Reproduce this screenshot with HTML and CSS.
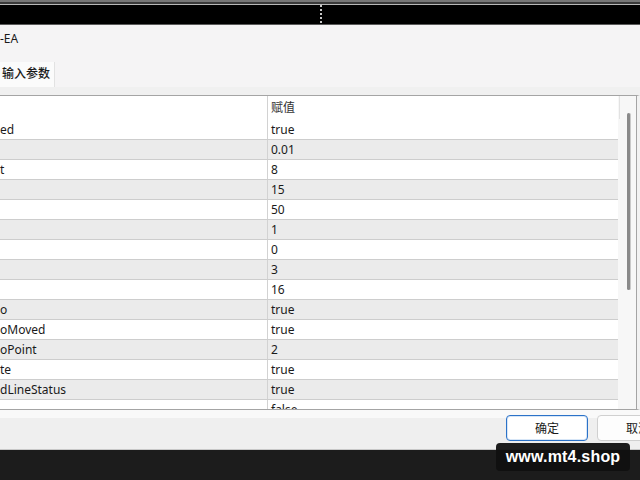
FILE: index.html
```html
<!DOCTYPE html>
<html lang="zh-CN">
<head>
<meta charset="utf-8">
<title>输入参数</title>
<link rel="stylesheet" href="styles.css">
</head>
<body>
<div class="screen">
  <div class="topbar">
    <div class="topbar-body"><span class="splitter"></span></div>
  </div>

  <div class="dialog">
    <div class="title">-EA</div>
    <div class="tabs"><div class="tab">输入参数</div></div>
    <div class="tab-gap"></div>

    <div class="grid-frame">
      <div class="grid">
        <div class="grid-head">
          <div class="cell name"></div>
          <div class="cell value">赋值</div>
        </div>
        <div class="grid-body">
          <div class="row"><div class="cell name">ed</div><div class="cell value">true</div></div>
          <div class="row alt"><div class="cell name"></div><div class="cell value">0.01</div></div>
          <div class="row"><div class="cell name">t</div><div class="cell value">8</div></div>
          <div class="row alt"><div class="cell name"></div><div class="cell value">15</div></div>
          <div class="row"><div class="cell name"></div><div class="cell value">50</div></div>
          <div class="row alt"><div class="cell name"></div><div class="cell value">1</div></div>
          <div class="row"><div class="cell name"></div><div class="cell value">0</div></div>
          <div class="row alt"><div class="cell name"></div><div class="cell value">3</div></div>
          <div class="row"><div class="cell name"></div><div class="cell value">16</div></div>
          <div class="row alt"><div class="cell name">o</div><div class="cell value">true</div></div>
          <div class="row"><div class="cell name">oMoved</div><div class="cell value">true</div></div>
          <div class="row alt"><div class="cell name">oPoint</div><div class="cell value">2</div></div>
          <div class="row"><div class="cell name">te</div><div class="cell value">true</div></div>
          <div class="row alt"><div class="cell name">dLineStatus</div><div class="cell value">true</div></div>
          <div class="row"><div class="cell name"></div><div class="cell value">false</div></div>
        </div>
      </div>
      <div class="scrollbar">
        <div class="scroll-head"></div>
        <div class="scroll-thumb"></div>
      </div>
    </div>

    <div class="footer">
      <button class="btn primary">确定</button>
      <button class="btn">取消</button>
    </div>
  </div>

  <div class="taskbar"></div>
  <div class="watermark">www.mt4.shop</div>
</div>
</body>
</html>
```

FILE: styles.css
```css
* {
  box-sizing: border-box;
}

html, body {
  margin: 0;
  padding: 0;
  background: #1c1c1c;
}

.screen {
  position: relative;
  width: 640px;
  height: 480px;
  overflow: hidden;
  display: flex;
  flex-direction: column;
  font-family: "Noto Sans", "Noto Sans CJK SC", sans-serif;
  font-size: 12px;
  color: #1a1a1a;
}

/* dark strip of the main window behind the dialog */
.topbar {
  height: 25px;
  flex: none;
  background: #777;
  padding-top: 2px;
}

.topbar-body {
  height: 23px;
  background: #000;
  border-top: 2px solid #3a3a3a;
  border-bottom: 1px solid #5a5a5a;
  box-shadow: inset 0 1px 0 #b8b8b8;
  padding-top: 1px;
}

.splitter {
  display: block;
  margin-left: 320px;
  width: 2px;
  height: 19px;
  background: repeating-linear-gradient(to bottom, #c8c8c8 0 2px, transparent 2px 4px);
}

.dialog {
  flex: none;
  height: 425px;
  background: #f5f4f5;
  display: flex;
  flex-direction: column;
}

.title {
  height: 34px;
  line-height: 28px;
  padding-left: 0;
  flex: none;
}

.tabs {
  height: 28px;
  flex: none;
  display: flex;
  align-items: flex-end;
  padding-top: 3px;
}

.tab {
  width: 55px;
  height: 25px;
  line-height: 23px;
  padding-left: 2px;
  background: #fbfbfb;
  border-right: 1px solid #e2e2e2;
  font-weight: 500;
}

.tab-gap {
  height: 8px;
  flex: none;
  background: #f0f0f0;
}

.grid-frame {
  flex: none;
  height: 315px;
  width: 640px;
  display: flex;
  background: #fff;
  border-top: 1px solid #a4a4a4;
  border-bottom: 1px solid #a4a4a4;
  border-right: 3px solid #f2f2f2;
}

.grid {
  width: 618px;
  flex: none;
  overflow: hidden;
}

.grid-head {
  display: flex;
  height: 24px;
  background: #fff;
}

.grid-head .cell {
  line-height: 24px;
  color: #333;
}

.row {
  display: flex;
  height: 20px;
  background: #fff;
  border-bottom: 1px solid #cdcdcd;
}

.row.alt {
  background: #ebebeb;
}

.cell {
  line-height: 19px;
  white-space: nowrap;
  overflow: hidden;
}

.cell.name {
  width: 268px;
  flex: none;
  border-right: 1px solid #d2d2d2;
}

.cell.value {
  flex: 1;
  padding-left: 3px;
}

.scrollbar {
  width: 19px;
  flex: none;
  background: #f7f7f7;
  border-right: 1px solid #a4a4a4;
  position: relative;
}

.scroll-head {
  width: 1px;
  height: 23px;
  margin-left: 1px;
  background: #e2e2e2;
}

.scroll-thumb {
  width: 3px;
  height: 177px;
  margin: -6px 0 0 9px;
  border-radius: 2px;
  background: #8a8a8a;
  box-shadow: 1px 0 0 #c9c9c9;
}

.footer {
  flex: none;
  height: 40px;
  display: flex;
  gap: 9px;
  padding: 5px 0 0 506px;
  background: linear-gradient(to bottom, #f9f9f9 0 8px, #efefef 8px);
  border-bottom: 1px solid #c8c8c8;
  overflow: hidden;
}

.btn {
  flex: none;
  width: 82px;
  height: 26px;
  font: inherit;
  color: #1a1a1a;
  background: #fdfdfd;
  border: 1px solid #d0d0d0;
  border-radius: 4px;
  padding: 0;
}

.btn.primary {
  background: #fff;
  border: 1px solid #2b72c8;
  box-shadow: inset 0 0 0 1px #d7e6f7;
}

.taskbar {
  flex: 1;
  background: #1c1c1c;
}

.watermark {
  position: absolute;
  left: 496px;
  top: 443px;
  width: 134px;
  height: 28px;
  line-height: 27px;
  text-align: center;
  background: rgba(16, 16, 16, 0.94);
  border-radius: 4px;
  color: #fff;
  font-family: "Liberation Sans", Arial, sans-serif;
  font-weight: bold;
  font-size: 16px;
  letter-spacing: 0.2px;
}
```
